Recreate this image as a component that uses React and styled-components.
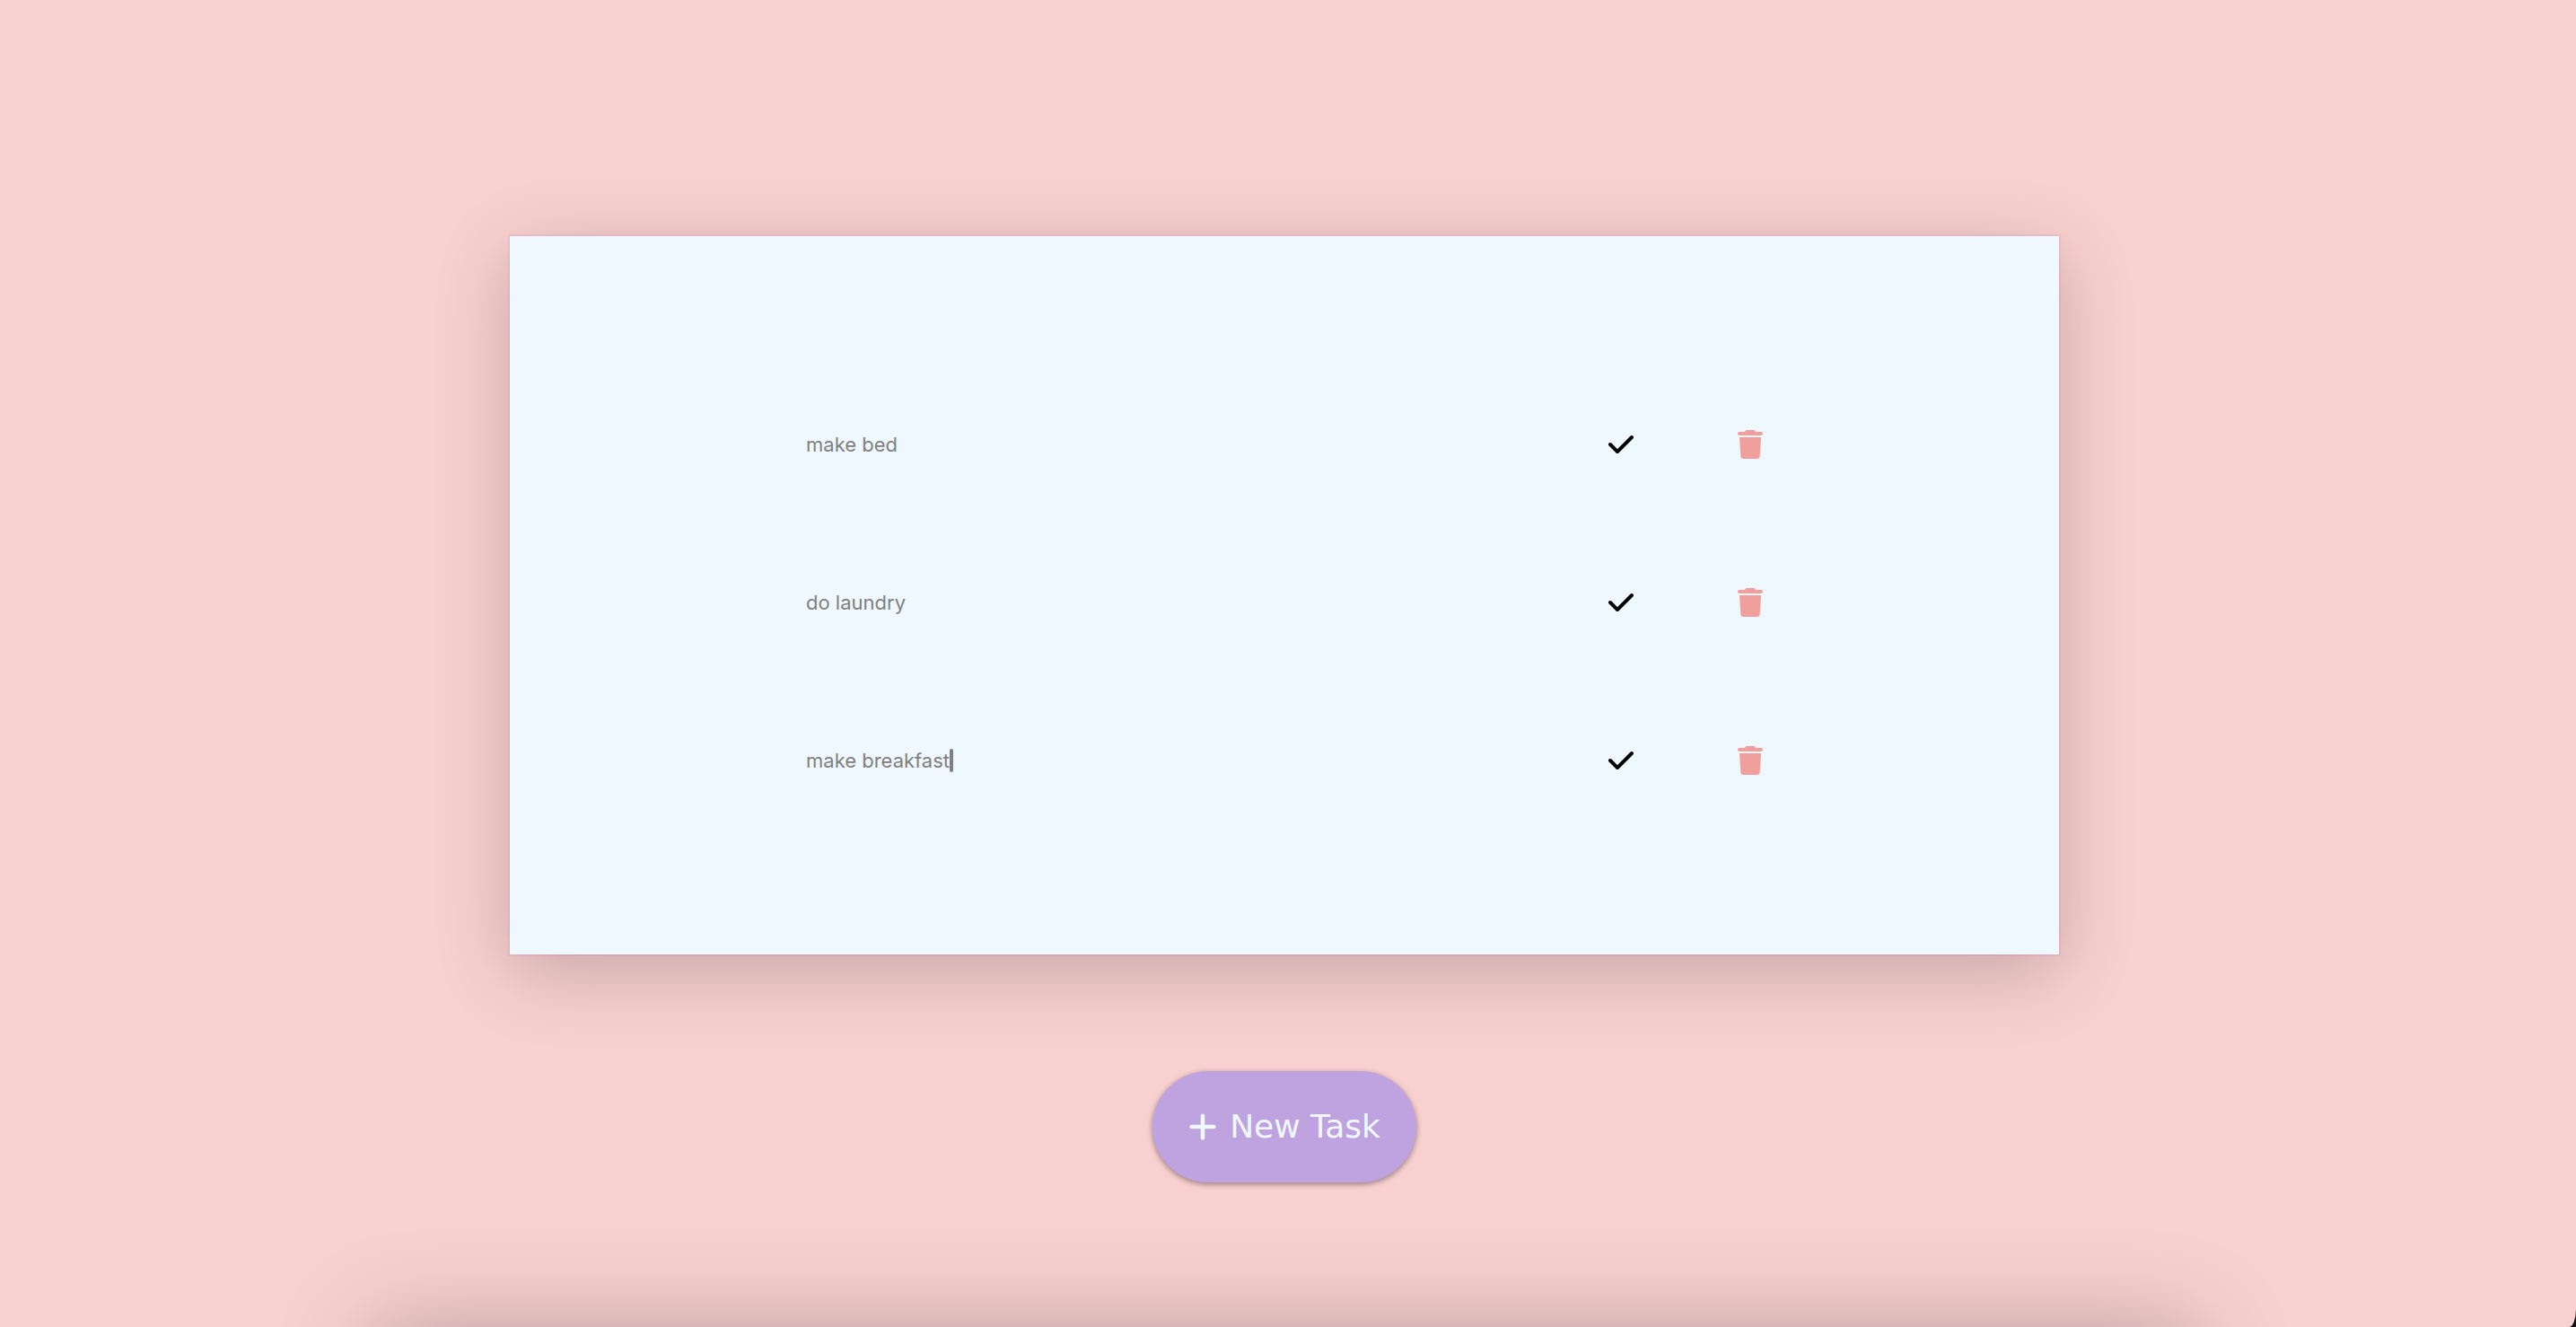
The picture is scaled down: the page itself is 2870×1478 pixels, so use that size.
import React, { useState } from "react";
import styled, { createGlobalStyle } from "styled-components";
import { FaCheck, FaPlus, FaTrash } from "react-icons/fa6";

const GlobalStyle = createGlobalStyle`
  *, *::before, *::after {
    box-sizing: border-box;
  }
  body {
    margin: 0;
    background: #0a0f18;
  }
`;

const Page = styled.main`
  height: 100vh;
  padding: 263px 8px 0 0;
  display: flex;
  flex-direction: column;
  align-items: center;
  overflow: hidden;
  background: #f8d0cf;
  border-bottom-right-radius: 8px 20px;
`;

const TaskCard = styled.section`
  flex: none;
  width: 60.3%;
  min-height: 800px;
  padding: 16px 24px 0;
  display: flex;
  flex-direction: column;
  align-items: center;
  justify-content: center;
  background: #f0f8ff;
  box-shadow:
    0 0 0 2px rgba(200, 100, 170, 0.12),
    0 20px 80px rgba(0, 0, 0, 0.2);
`;

const TaskList = styled.ul`
  width: 100%;
  max-width: 1066px;
  margin: 0;
  padding: 0;
  display: flex;
  flex-direction: column;
  gap: 136px;
  list-style: none;
`;

const TaskRow = styled.li`
  height: 40px;
  display: flex;
  align-items: center;
  gap: 116px;
`;

const TaskField = styled.label`
  flex: 1;
  display: flex;
  align-items: center;
`;

const TaskInput = styled.input`
  field-sizing: content;
  height: 32px;
  padding: 0;
  border: 0;
  outline: 0;
  background: transparent;
  color: #808080;
  font: 400 22px/32px Inter, sans-serif;
`;

const Caret = styled.span`
  width: 4px;
  height: 26px;
  border-radius: 2px;
  background: #808080;
`;

const IconButton = styled.button`
  padding: 0;
  display: flex;
  border: 0;
  background: transparent;
  color: ${({ $color }) => $color};
  cursor: pointer;

  svg {
    width: 28px;
    height: 32px;
  }
`;

const NewTaskButton = styled.button`
  flex: none;
  height: 124px;
  margin: 130px 0 164px;
  padding: 0 40px;
  display: flex;
  align-items: center;
  gap: 14px;
  border: 0;
  border-radius: 62px;
  background: #bfa3e0;
  box-shadow: 0 2px 6px rgba(0, 0, 0, 0.4);
  color: #f0f8ff;
  font: 400 36px/44px "DejaVu Sans", sans-serif;
  cursor: pointer;

  svg {
    width: 32px;
    height: 36px;
  }
`;

const FinishedCard = styled.section`
  flex: none;
  width: 71%;
  height: 800px;
  background: #f0f8ff;
  box-shadow: 0 0 100px rgba(0, 0, 0, 0.25);
`;

const initialTasks = [
  { id: 1, title: "make bed" },
  { id: 2, title: "do laundry" },
  { id: 3, title: "make breakfast" },
];

export default function App() {
  const [tasks, setTasks] = useState(initialTasks);
  const [activeId, setActiveId] = useState(3);

  const rename = (id, title) =>
    setTasks(tasks.map((task) => (task.id === id ? { ...task, title } : task)));
  const remove = (id) => setTasks(tasks.filter((task) => task.id !== id));
  const add = () => {
    const id = Date.now();
    setTasks([...tasks, { id, title: "" }]);
    setActiveId(id);
  };

  return (
    <>
      <GlobalStyle />
      <Page>
        <TaskCard>
          <TaskList>
            {tasks.map(({ id, title }) => (
              <TaskRow key={id}>
                <TaskField>
                  <TaskInput
                    type="text"
                    aria-label="Task"
                    value={title}
                    onFocus={() => setActiveId(id)}
                    onChange={(event) => rename(id, event.target.value)}
                  />
                  {id === activeId && <Caret />}
                </TaskField>
                <IconButton type="button" aria-label="Complete task" $color="#000000">
                  <FaCheck />
                </IconButton>
                <IconButton
                  type="button"
                  aria-label="Delete task"
                  $color="#f19f9c"
                  onClick={() => remove(id)}
                >
                  <FaTrash />
                </IconButton>
              </TaskRow>
            ))}
          </TaskList>
        </TaskCard>
        <NewTaskButton type="button" onClick={add}>
          <FaPlus />
          New Task
        </NewTaskButton>
        <FinishedCard />
      </Page>
    </>
  );
}
